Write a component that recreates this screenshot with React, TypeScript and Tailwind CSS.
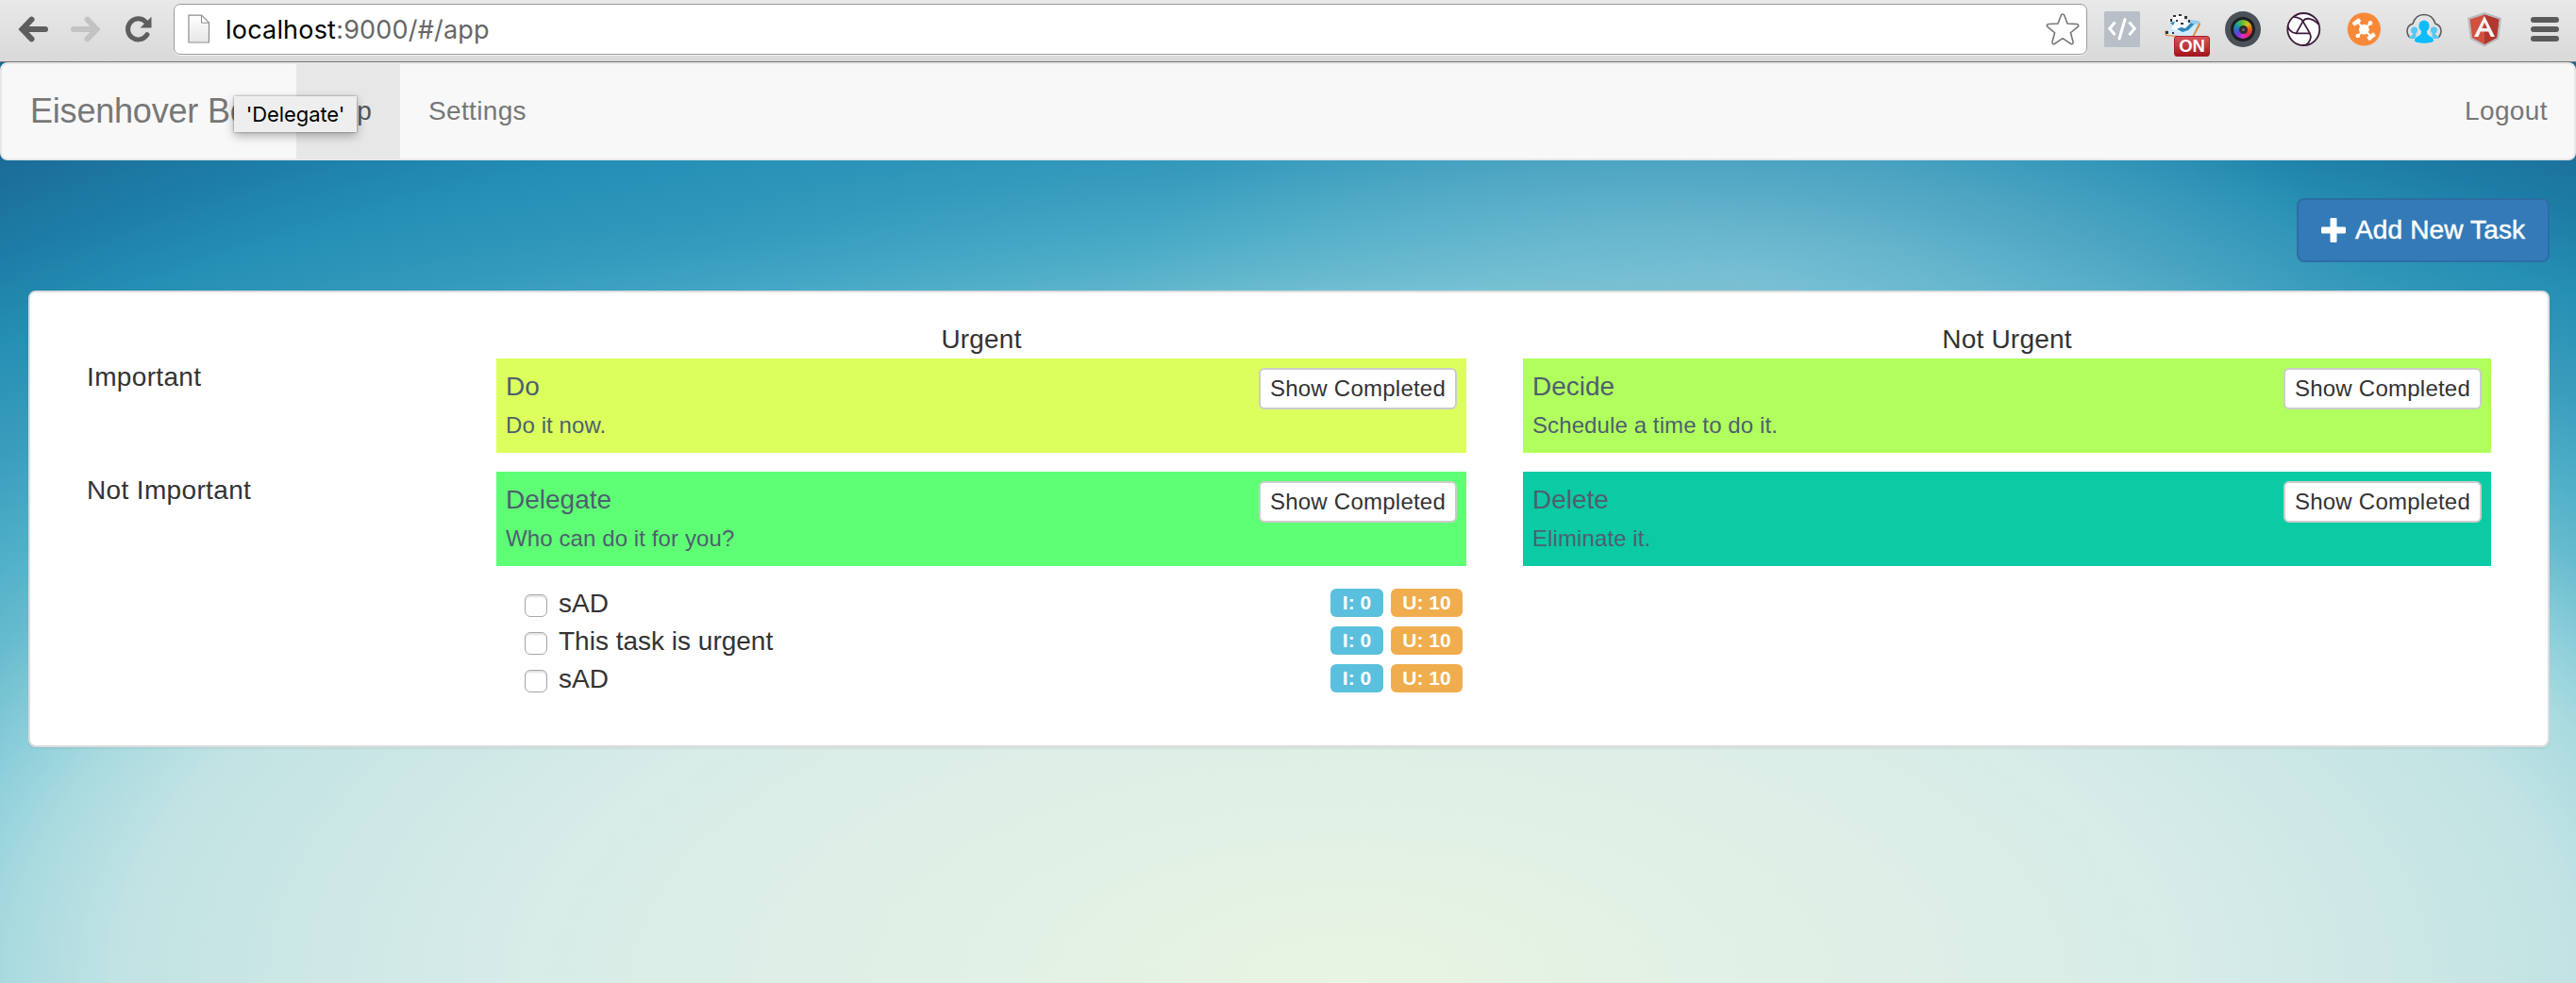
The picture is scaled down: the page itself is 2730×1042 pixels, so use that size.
import React from "react";

function BackArrow({ faded = false }: { faded?: boolean }) {
  return (
    <svg
      width="34"
      height="30"
      viewBox="0 0 34 30"
      className={faded ? "rotate-180 text-[#c3c3c3]" : "text-[#5e5e5e]"}
      fill="none"
      stroke="currentColor"
      strokeWidth="6"
      strokeLinecap="round"
      strokeLinejoin="round"
    >
      <path d="M6 15H30" />
      <path d="M15.5 4.6L5.6 15L15.5 25.4" strokeLinejoin="miter" />
    </svg>
  );
}

function Reload() {
  return (
    <svg width="30" height="30" viewBox="0 0 30 30" fill="none">
      <path d="M23.9 20.6A11 11 0 1 1 22.6 7.4" stroke="#5e5e5e" strokeWidth="5" strokeLinecap="round" />
      <path d="M28.5 1.8V13.6H16.6Z" fill="#5e5e5e" />
    </svg>
  );
}

function PageIcon() {
  return (
    <svg width="24" height="32" viewBox="0 0 24 32">
      <defs>
        <linearGradient id="paper" x1="0" y1="0" x2="0" y2="1">
          <stop offset="0" stopColor="#ffffff" />
          <stop offset="1" stopColor="#e6e6e6" />
        </linearGradient>
      </defs>
      <path d="M1 1.2H14.5L22.5 9.2V30H1Z" fill="url(#paper)" stroke="#8d8d8d" strokeWidth="1.2" />
      <path d="M14.5 1.2V9.2H22.5Z" fill="#fff" stroke="#8d8d8d" strokeWidth="1" />
    </svg>
  );
}

function Star() {
  return (
    <svg width="38" height="38" viewBox="0 0 38 38" fill="none">
      <path
        d="M19 3C19.9 3 20.5 3.6 20.9 4.7L24 13L33.8 13.5C36 13.7 36.3 15.3 34.8 16.6L27.4 22.7L30 32.2C30.5 34.4 29.2 35.3 27.4 34.2L19 28.7L10.6 34.2C8.8 35.3 7.5 34.4 8 32.2L10.6 22.7L3.2 16.6C1.7 15.3 2 13.7 4.2 13.5L14 13L17.1 4.7C17.5 3.6 18.1 3 19 3Z"
        stroke="#777"
        strokeWidth="1.6"
      />
    </svg>
  );
}

function CodeExt() {
  return (
    <svg width="38" height="38" viewBox="0 0 38 38">
      <rect width="38" height="38" rx="1.5" fill="#b9bfc8" />
      <g fill="none" stroke="#fff" strokeWidth="3">
        <path d="M11.5 11.5L5.8 18.3L11.5 25" />
        <path d="M26.5 11.5L32.2 18.3L26.5 25" />
        <path d="M22 8.5L16 29" strokeLinecap="round" />
      </g>
    </svg>
  );
}

function PlaneExt() {
  return (
    <div className="relative h-[38px] w-[38px]">
      <svg width="38" height="38" viewBox="0 0 38 38">
        <path d="M10 10L38 11L29 28L1 24Z" fill="#cfeafb" />
        <path d="M0 21L3 20L2 25L29 27L37 11L38 14L30 29L12 27L1 26Z" fill="#e58a3a" />
        <path d="M8 12L20 9L27 14L18 22L8 19Z" fill="#f5fbff" />
        <path d="M6 12L11 11L9 15ZM13 19L17 17L22 18L29 11L33 12L25 20L19 22Z" fill="#2f86bd" />
        <path d="M25 9L37 10L35 14L29 13Z" fill="#8fcdf0" />
        <path d="M9 5H21L21 9L9 10Z" fill="#fff" />
        <g fill="#353535">
          <rect x="9" y="4" width="3" height="2" />
          <rect x="15" y="3" width="3" height="2" />
          <rect x="21" y="5" width="3" height="3" />
          <rect x="25" y="9" width="2" height="3" />
          <rect x="6" y="8" width="2" height="3" />
          <rect x="12" y="9" width="2" height="2" />
          <rect x="17" y="12" width="3" height="2" />
          <rect x="1" y="21" width="3" height="3" />
          <rect x="8" y="22" width="2" height="2" />
        </g>
      </svg>
      <span className="absolute left-[10px] top-[26px] flex h-[22px] w-[38px] items-center justify-center rounded-[3px] border border-[#a02028] bg-linear-to-b from-[#d9525a] to-[#a5121b] font-['Liberation_Sans',Arial,sans-serif] text-[18.5px] leading-none font-bold text-white">
        ON
      </span>
    </div>
  );
}

function CameraExt() {
  return (
    <div className="flex h-[38px] w-[38px] items-center justify-center rounded-full bg-[#4b5158]">
      <div className="flex h-[26px] w-[26px] items-center justify-center rounded-full bg-[#1d2023]">
        <div className="flex h-[20px] w-[20px] items-center justify-center rounded-full bg-[conic-gradient(#6dbf2c,#d8c020,#e55a20,#e5265a,#e62bc8,#6a3be0,#2a6fd0,#1fa987,#6dbf2c)]">
          <div className="flex h-[9px] w-[9px] items-center justify-center rounded-full bg-[#2c2c2c]">
            <div className="h-[3px] w-[3px] rounded-full bg-[#6b6b6b]" />
          </div>
        </div>
      </div>
    </div>
  );
}

function SwirlExt() {
  return (
    <svg width="38" height="38" viewBox="0 0 38 38" fill="none" stroke="#3d1c3b" strokeWidth="1.8">
      <circle cx="19.3" cy="19" r="17" fill="#fff" />
      <path d="M26 23.4L18.6 10.6C16.8 7.6 13 6.4 9.2 6.2" />
      <path d="M11.4 23.4L18.6 10.6C22 5.6 30 7.6 35.4 14" />
      <path d="M26 23.4H11.4C6 23.2 3 18.4 2.6 15.6" />
      <path d="M26 23.4C28.4 28 25.6 33 21.6 35.8" />
    </svg>
  );
}

function OrangeExt() {
  return (
    <svg width="38" height="38" viewBox="0 0 38 38">
      <circle cx="19.4" cy="19" r="17.6" fill="#f98938" />
      <g stroke="#fff" strokeWidth="2" fill="none">
        <path d="M12 11L27 27" />
        <path d="M26 12.5L13 26" />
      </g>
      <g fill="#fff">
        <circle cx="19.4" cy="19.2" r="5.4" />
        <circle cx="26" cy="12.4" r="2.3" />
        <circle cx="12.8" cy="26" r="2.3" />
        <rect x="7" y="9.2" width="9" height="4.4" rx="1" transform="rotate(-38 11.5 11.4)" />
        <rect x="22.6" y="24.4" width="9" height="4.6" rx="1" transform="rotate(-38 27.1 26.7)" />
      </g>
    </svg>
  );
}

function CloudPeopleExt() {
  return (
    <svg width="38" height="38" viewBox="0 0 38 38">
      <path
        d="M3.5 27.5C-1 22 1 14.5 7 13.2C9 6.5 14 3.4 19 3.4S29 6.5 31 13.2C37 14.5 39 22 34.5 27.5"
        fill="none"
        stroke="#555b60"
        strokeWidth="1.5"
      />
      <g fill="#57c8f5">
        <circle cx="8.6" cy="20" r="3.6" />
        <path d="M3 29C3 26 7 26.4 7 23H10.4C10.4 26 11 26.6 9 29Z" />
        <circle cx="29.4" cy="20" r="3.6" />
        <path d="M35 29C35 26 31 26.4 31 23H27.6C27.6 26 27 26.6 29 29Z" />
      </g>
      <g fill="#0dbdfb">
        <ellipse cx="19" cy="15.6" rx="5.6" ry="6.2" />
        <path d="M9 31C9 26 16 26.6 16 22.5V19H22V22.5C22 26.6 29 26 29 31C29 34.6 9 34.6 9 31Z" />
      </g>
    </svg>
  );
}

function AngularExt() {
  return (
    <svg width="38" height="38" viewBox="0 0 38 38">
      <path d="M19 1L37 7L34.2 29.3L19 37.4L3.8 29.3L1 7Z" fill="#b8bbbd" />
      <path d="M19 3.4L34.4 8.4L32 28L19 35L6 28L3.6 8.4Z" fill="#d1503f" />
      <path d="M19 3.4L34.4 8.4L32 28L19 35Z" fill="#b0382e" />
      <path d="M19 5L30 27H25.6L23.2 21.4H14.8L12.4 27H8ZM19 11.8L16.2 18H21.8Z" fill="#f4f4f4" fillRule="evenodd" />
    </svg>
  );
}

function MenuIcon() {
  return (
    <div className="flex w-[30px] flex-col gap-1">
      <div className="h-[6px] rounded-full bg-[#5a5a5a]" />
      <div className="h-[6px] rounded-full bg-[#5a5a5a]" />
      <div className="h-[6px] rounded-full bg-[#5a5a5a]" />
    </div>
  );
}

function BrowserBar() {
  return (
    <div className="flex h-[66px] shrink-0 items-start border-b border-[#777] bg-linear-to-b from-[#e9e9e9] to-[#d9d9d9] font-[Inter,sans-serif]">
      <div className="flex w-[184px] items-center pt-4 pl-[18px]">
        <BackArrow />
        <div className="w-[22px]" />
        <BackArrow faded />
        <div className="w-6" />
        <Reload />
      </div>
      <div className="mt-1 flex h-[54px] w-[2028px] items-center rounded-[7px] border border-[#9b9b9b] bg-white pr-[6px] pl-[14px] shadow-[0_1px_0_#f2f2f2]">
        <PageIcon />
        <div className="flex-1 pt-[2px] pl-4 text-[27px] leading-[50px] tracking-[0.2px] text-[#666]">
          <span className="text-black">localhost</span>:9000/#/app
        </div>
        <Star />
      </div>
      <div className="mt-3 ml-[18px] flex items-center gap-[26px]">
        <CodeExt />
        <PlaneExt />
        <CameraExt />
        <SwirlExt />
        <OrangeExt />
        <CloudPeopleExt />
        <AngularExt />
        <div className="ml-1">
          <MenuIcon />
        </div>
      </div>
    </div>
  );
}

function Navbar() {
  return (
    <nav className="relative flex h-[104px] rounded-lg border-2 border-[#e7e7e7] bg-[#f8f8f8] leading-10 text-[#777]">
      <div className="w-[312px] py-[30px] pl-[30px] text-[36px] tracking-[-0.2px]">Eisenhover Box</div>
      <div className="w-[110px] bg-[#e7e7e7] py-[30px] pl-[30px] text-[#555]">App</div>
      <div className="px-[30px] py-[30px] tracking-[0.35px]">Settings</div>
      <div className="ml-auto py-[30px] pr-[28px] tracking-[0.4px]">Logout</div>
      <div className="absolute top-[34px] left-[246px] flex h-[38px] w-[130px] items-center justify-center bg-[#eeeeee] font-[Inter,sans-serif] text-[22px] tracking-[-0.1px] text-black shadow-[0_0_2px_rgba(0,0,0,0.45),0_4px_10px_rgba(0,0,0,0.3)]">
        'Delegate'
      </div>
    </nav>
  );
}

function Quadrant({ title, hint, color }: { title: string; hint: string; color: string }) {
  return (
    <div className={`flex h-[100px] items-start justify-between p-[10px] text-[#4f5f6f] ${color}`}>
      <div>
        <div className="leading-10">{title}</div>
        <div className="text-[24px] leading-[42px] tracking-[0.1px]">{hint}</div>
      </div>
      <button className="h-[44px] w-[210px] rounded-md border-2 border-[#ccc] bg-white text-[24px] leading-[38px] tracking-[0.24px] text-[#333]">
        Show Completed
      </button>
    </div>
  );
}

function Task({ name }: { name: string }) {
  return (
    <li className="flex h-10 items-start leading-10">
      <span className="mt-[10px] h-6 w-6 rounded-[6px] border border-[#a8a8a8] bg-white shadow-[inset_0_2px_2px_rgba(0,0,0,0.12)]" />
      <span className="ml-3 flex-1">{name}</span>
      <span className="mt-1 flex gap-2 text-[21px] leading-[30px] font-bold text-white">
        <span className="h-[30px] w-14 rounded-md bg-[#5bc0de] text-center">I: 0</span>
        <span className="h-[30px] w-[76px] rounded-md bg-[#f0ad4e] text-center">U: 10</span>
      </span>
    </li>
  );
}

const tasks = ["sAD", "This task is urgent", "sAD"];

export default function App() {
  return (
    <div className="flex h-[1042px] w-[2730px] flex-col overflow-hidden font-['Liberation_Sans',Arial,sans-serif] text-[28px] text-[#333]">
      <BrowserBar />
      <div className="flex-1 bg-[radial-gradient(650px_260px_at_1850px_230px,rgba(150,200,218,0.5),rgba(150,200,218,0)),radial-gradient(900px_280px_at_750px_180px,rgba(30,140,185,0.35),rgba(30,140,185,0)),radial-gradient(2500px_1150px_at_1430px_100%,#e9f5e3_0%,#deefe6_21%,#d8ece8_35%,#c2e3e4_52%,#a8dadf_57%,#8fd0db_60%,#66bbce_65%,#50b0c9_69%,#3a9dbd_75%,#268fb4_82%,#1d7ca5_88%,#1a6894_96%)]">
        <Navbar />
        <div className="flex justify-end pt-10 pr-7">
          <button className="flex h-[68px] w-[268px] items-center rounded-lg border-2 border-[#2e6da4] bg-[#337ab7] pl-6 text-white">
            <svg width="26" height="26" viewBox="0 0 26 26" fill="#fff">
              <path d="M9.5 1Q9.5 0 10.5 0H15.5Q16.5 0 16.5 1V9.5H25Q26 9.5 26 10.5V15.5Q26 16.5 25 16.5H16.5V25Q16.5 26 15.5 26H10.5Q9.5 26 9.5 25V16.5H1Q0 16.5 0 15.5V10.5Q0 9.5 1 9.5H9.5Z" />
            </svg>
            <span className="ml-[10px] tracking-[0.15px] [-webkit-text-stroke:0.5px_white]">Add New Task</span>
          </button>
        </div>
        <main className="mt-[30px] mr-7 ml-[30px] h-[484px] rounded-lg border-2 border-[#ddd] bg-white px-[30px] pt-[30px] shadow-[0_2px_2px_rgba(0,0,0,0.05)]">
          <div className="grid grid-cols-[434px_1088px_1086px] leading-10">
            <div className="col-start-2 text-center tracking-[0.2px]">Urgent</div>
            <div className="text-center tracking-[0.2px]">Not Urgent</div>
          </div>
          <div className="grid grid-cols-[434px_1088px_1086px]">
            <div className="px-[30px] leading-10 tracking-[0.35px]">Important</div>
            <div className="px-[30px]">
              <Quadrant title="Do" hint="Do it now." color="bg-[#dcff5e]" />
            </div>
            <div className="px-[30px]">
              <Quadrant title="Decide" hint="Schedule a time to do it." color="bg-[#b1ff5e]" />
            </div>
          </div>
          <div className="mt-5 grid grid-cols-[434px_1088px_1086px]">
            <div className="px-[30px] leading-10 tracking-[0.35px]">Not Important</div>
            <div className="px-[30px]">
              <Quadrant title="Delegate" hint="Who can do it for you?" color="bg-[#5fff75]" />
              <ul className="mt-5 pr-1 pl-[30px]">
                {tasks.map((name, i) => (
                  <Task key={i} name={name} />
                ))}
              </ul>
            </div>
            <div className="px-[30px]">
              <Quadrant title="Delete" hint="Eliminate it." color="bg-[#0acba3]" />
            </div>
          </div>
        </main>
      </div>
    </div>
  );
}
